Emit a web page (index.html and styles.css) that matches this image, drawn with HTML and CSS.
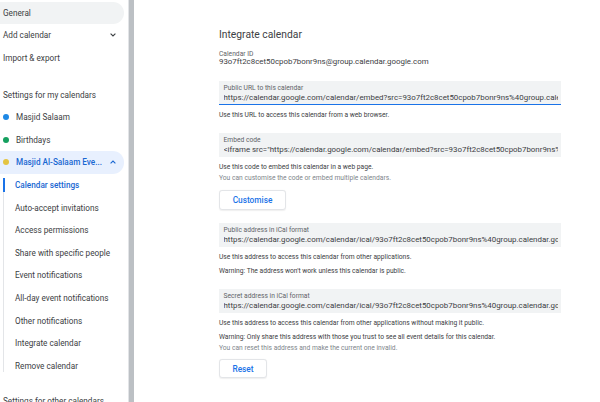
FILE: index.html
```html
<!DOCTYPE html>
<html>
<head>
<meta charset="utf-8">
<link rel="stylesheet" href="styles.css">
</head>
<body>
<div class="app">
  <nav class="sidebar">
    <div class="item pill">General</div>
    <div class="item">Add calendar
      <svg class="chev" viewBox="0 0 6 4" width="6" height="4"><polyline points="0.6,0.6 3,3 5.4,0.6" fill="none" stroke="#3c4043" stroke-width="1.1"/></svg>
    </div>
    <div class="item">Import &amp; export</div>
    <div class="item heading">Settings for my calendars</div>
    <div class="item cal"><span class="dot blue"></span>Masjid Salaam</div>
    <div class="item cal"><span class="dot green"></span>Birthdays</div>
    <div class="item cal pill active"><span class="dot yellow"></span>Masjid Al-Salaam Eve...
      <svg class="chev" viewBox="0 0 6 4" width="6" height="4"><polyline points="0.6,3.4 3,1 5.4,3.4" fill="none" stroke="#1967d2" stroke-width="1.1"/></svg>
    </div>
    <div class="sublist">
      <div class="sub current">Calendar settings</div>
      <div class="sub">Auto-accept invitations</div>
      <div class="sub">Access permissions</div>
      <div class="sub">Share with specific people</div>
      <div class="sub">Event notifications</div>
      <div class="sub">All-day event notifications</div>
      <div class="sub">Other notifications</div>
      <div class="sub">Integrate calendar</div>
      <div class="sub">Remove calendar</div>
    </div>
    <div class="item heading other">Settings for other calendars</div>
  </nav>
  <div class="divider"></div>
  <main class="main">
    <h1 class="title">Integrate calendar</h1>
    <div class="label id-label">Calendar ID</div>
    <div class="value">93o7ft2c8cet50cpob7bonr9ns@group.calendar.google.com</div>

    <div class="field focused f1">
      <div class="flabel">Public URL to this calendar</div>
      <div class="fvalue">https://calendar.google.com/calendar/embed?src=93o7ft2c8cet50cpob7bonr9ns%40group.calendar.google.com&amp;ctz=Europe%2FLondon</div>
    </div>
    <p class="help">Use this URL to access this calendar from a web browser.</p>

    <div class="field f2">
      <div class="flabel">Embed code</div>
      <div class="fvalue">&lt;iframe src="https://calendar.google.com/calendar/embed?src=93o7ft2c8cet50cpob7bonr9ns%40group.calendar.google.com&amp;ctz=Europe%2FLondon" style="border: 0" width="800" height="600" frameborder="0" scrolling="no"&gt;&lt;/iframe&gt;</div>
    </div>
    <p class="help">Use this code to embed this calendar in a web page.</p>
    <p class="help muted">You can customise the code or embed multiple calendars.</p>
    <button class="btn btn-customise">Customise</button>

    <div class="field f3">
      <div class="flabel">Public address in iCal format</div>
      <div class="fvalue">https://calendar.google.com/calendar/ical/93o7ft2c8cet50cpob7bonr9ns%40group.calendar.google.com/public/basic.ics</div>
    </div>
    <p class="help">Use this address to access this calendar from other applications.</p>
    <p class="help warn">Warning: The address won't work unless this calendar is public.</p>

    <div class="field f4">
      <div class="flabel">Secret address in iCal format</div>
      <div class="fvalue">https://calendar.google.com/calendar/ical/93o7ft2c8cet50cpob7bonr9ns%40group.calendar.google.com/private/basic.ics</div>
    </div>
    <p class="help">Use this address to access this calendar from other applications without making it public.</p>
    <p class="help warn">Warning: Only share this address with those you trust to see all event details for this calendar.</p>
    <p class="help muted">You can reset this address and make the current one invalid.</p>
    <button class="btn btn-reset">Reset</button>
  </main>
</div>
</body>
</html>
```

FILE: styles.css
```css
* { box-sizing: border-box; }
html, body {
  margin: 0;
  padding: 0;
  background: #ffffff;
  overflow: hidden;
}
body {
  font-family: Roboto, "Liberation Sans", Arial, sans-serif;
  color: #3c4043;
  width: 600px;
  height: 402px;
}
.app {
  display: flex;
  height: 402px;
  overflow: hidden;
}

/* Sidebar */
.sidebar {
  width: 128px;
  flex: none;
  padding-top: 1.5px;
  font-size: 8.2px;
  color: #3c4043;
}
.item {
  position: relative;
  height: 22.6px;
  display: flex;
  align-items: center;
  padding-left: 3px;
  margin-right: 4px;
  white-space: nowrap;
}
.pill {
  background: #f1f3f4;
  border-radius: 0 11.3px 11.3px 0;
}
.heading { margin-top: 14px; }
.heading.other { margin-top: 13px; }
.cal { padding-left: 16px; }
.dot {
  position: absolute;
  left: 2.5px;
  top: 50%;
  width: 6px;
  height: 6px;
  margin-top: -3px;
  border-radius: 50%;
}
.dot.blue { background: #1e88e5; }
.dot.green { background: #15a05f; }
.dot.yellow { background: #e4c441; }
.active {
  background: #e8f0fe;
  color: #1967d2;
  font-weight: 500;
}
.chev {
  position: absolute;
  left: 110px;
  top: 50%;
  margin-top: -2px;
}
.sublist {
  position: relative;
  margin-left: 3px;
  padding-left: 12px;
}
.sublist::before {
  content: "";
  position: absolute;
  left: 0;
  top: 4px;
  bottom: 5px;
  width: 1px;
  background: #e3e5e8;
}
.sub {
  position: relative;
  height: 22.6px;
  display: flex;
  align-items: center;
  white-space: nowrap;
}
.sub.current {
  color: #1967d2;
  font-weight: 500;
}
.sub.current::before {
  content: "";
  position: absolute;
  left: -12px;
  top: 4.5px;
  bottom: 4px;
  width: 2px;
  background: #1a73e8;
}

.divider {
  width: 6px;
  flex: none;
  background: #bcc0c4;
  border-left: 1px solid #e2e4e7;
}

/* Main */
.main {
  flex: 1;
  padding: 28px 0 0 85px;
  min-width: 0;
}
.title {
  margin: 0;
  font-size: 10.3px;
  line-height: 14px;
  font-weight: 400;
  color: #3c4043;
}
.label {
  font-size: 6.7px;
  line-height: 8px;
  color: #5f6368;
}
.id-label { margin-top: 8px; }
.value {
  font-size: 7.9px;
  line-height: 8px;
  color: #3c4043;
  white-space: nowrap;
}
.field {
  width: 342px;
  height: 24px;
  background: #f1f3f4;
  padding: 3px 3px 0 4.5px;
  overflow: hidden;
  white-space: nowrap;
}
.field.focused {
  border-bottom: 1px solid #1a73e8;
}
.f1 { margin-top: 15px; }
.f2 { margin-top: 12px; }
.f3 { margin-top: 13px; }
.f4 { margin-top: 12px; }
.flabel {
  font-size: 6.7px;
  line-height: 9px;
  color: #5f6368;
}
.fvalue {
  font-size: 7.9px;
  line-height: 10px;
  color: #3c4043;
  overflow: hidden;
}
.help {
  margin: 5px 0 0 0;
  font-size: 6.7px;
  line-height: 11px;
  color: #3c4043;
  white-space: nowrap;
}
.help + .help { margin-top: 0; }
.help.warn { margin-top: 3px; }
.help.muted { color: #80868b; }
.btn {
  display: block;
  background: #ffffff;
  border: 1px solid #e3e5e8;
  border-radius: 3px;
  color: #1a73e8;
  font-family: Roboto, "Liberation Sans", Arial, sans-serif;
  font-size: 8.3px;
  font-weight: 500;
  padding: 0;
  box-shadow: 0 0.5px 1px rgba(60, 64, 67, 0.08);
}
.btn-customise {
  margin-top: 6px;
  width: 67px;
  height: 20px;
}
.btn-reset {
  margin-top: 5px;
  width: 48px;
  height: 19px;
}
```
